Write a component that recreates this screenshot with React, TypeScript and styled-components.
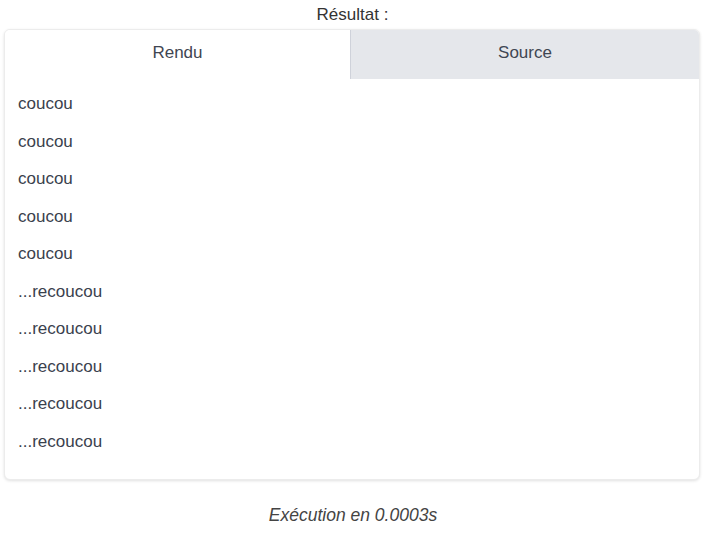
import React, { useState } from "react";
import styled, { createGlobalStyle } from "styled-components";

const Global = createGlobalStyle`
  html, body { margin: 0; padding: 0; background: #ffffff; }
  body { font-family: "Liberation Sans", Arial, sans-serif; }
`;

const Page = styled.div`
  width: 709px;
  padding: 5px 9px 0 4px;
  box-sizing: border-box;
  display: flex;
  flex-direction: column;
`;

const Title = styled.div`
  text-align: center;
  font-size: 17px;
  line-height: 20px;
  color: #333333;
  padding-left: 1px;
`;

const Card = styled.div`
  margin-top: 4px;
  border: 1px solid #ececec;
  border-radius: 6px;
  box-shadow: 0 1px 3px rgba(0, 0, 0, 0.12);
  overflow: hidden;
  background: #ffffff;
`;

const TabBar = styled.div`
  display: grid;
  grid-template-columns: 345px 1fr;
  height: 49px;
`;

const Tab = styled.button<{ $active: boolean }>`
  all: unset;
  display: flex;
  align-items: center;
  justify-content: center;
  padding-bottom: 3px;
  font-family: "Liberation Sans", Arial, sans-serif;
  font-size: 17px;
  color: #3f4652;
  cursor: pointer;
  background: ${(p) => (p.$active ? "#ffffff" : "#e5e7eb")};
  border-left: ${(p) => (p.$active ? "none" : "1px solid #cfd2da")};
`;

const Content = styled.div`
  padding: 14px 13px 27px;
  display: flex;
  flex-direction: column;
  gap: 16px;
`;

const Line = styled.p`
  margin: 0;
  font-size: 17px;
  line-height: 21.5px;
  color: #3a414d;
`;

const Source = styled.pre`
  margin: 0;
  font-family: "Liberation Mono", monospace;
  font-size: 14px;
  color: #374151;
`;

const Footer = styled.div`
  margin-top: 25px;
  text-align: center;
  font-style: italic;
  font-size: 17.5px;
  line-height: 20px;
  color: #444444;
  padding-left: 2px;
`;

const lines = [
  "coucou",
  "coucou",
  "coucou",
  "coucou",
  "coucou",
  "...recoucou",
  "...recoucou",
  "...recoucou",
  "...recoucou",
  "...recoucou",
];

export default function App() {
  const [tab, setTab] = useState<"rendu" | "source">("rendu");
  return (
    <>
      <Global />
      <Page>
        <Title>Résultat :</Title>
        <Card>
          <TabBar>
            <Tab $active={tab === "rendu"} onClick={() => setTab("rendu")}>
              Rendu
            </Tab>
            <Tab $active={tab === "source"} onClick={() => setTab("source")}>
              Source
            </Tab>
          </TabBar>
          <Content>
            {tab === "rendu" ? (
              lines.map((l, i) => <Line key={i}>{l}</Line>)
            ) : (
              <Source>{lines.map((l) => `<p>${l}</p>`).join("\n")}</Source>
            )}
          </Content>
        </Card>
        <Footer>Exécution en 0.0003s</Footer>
      </Page>
    </>
  );
}
